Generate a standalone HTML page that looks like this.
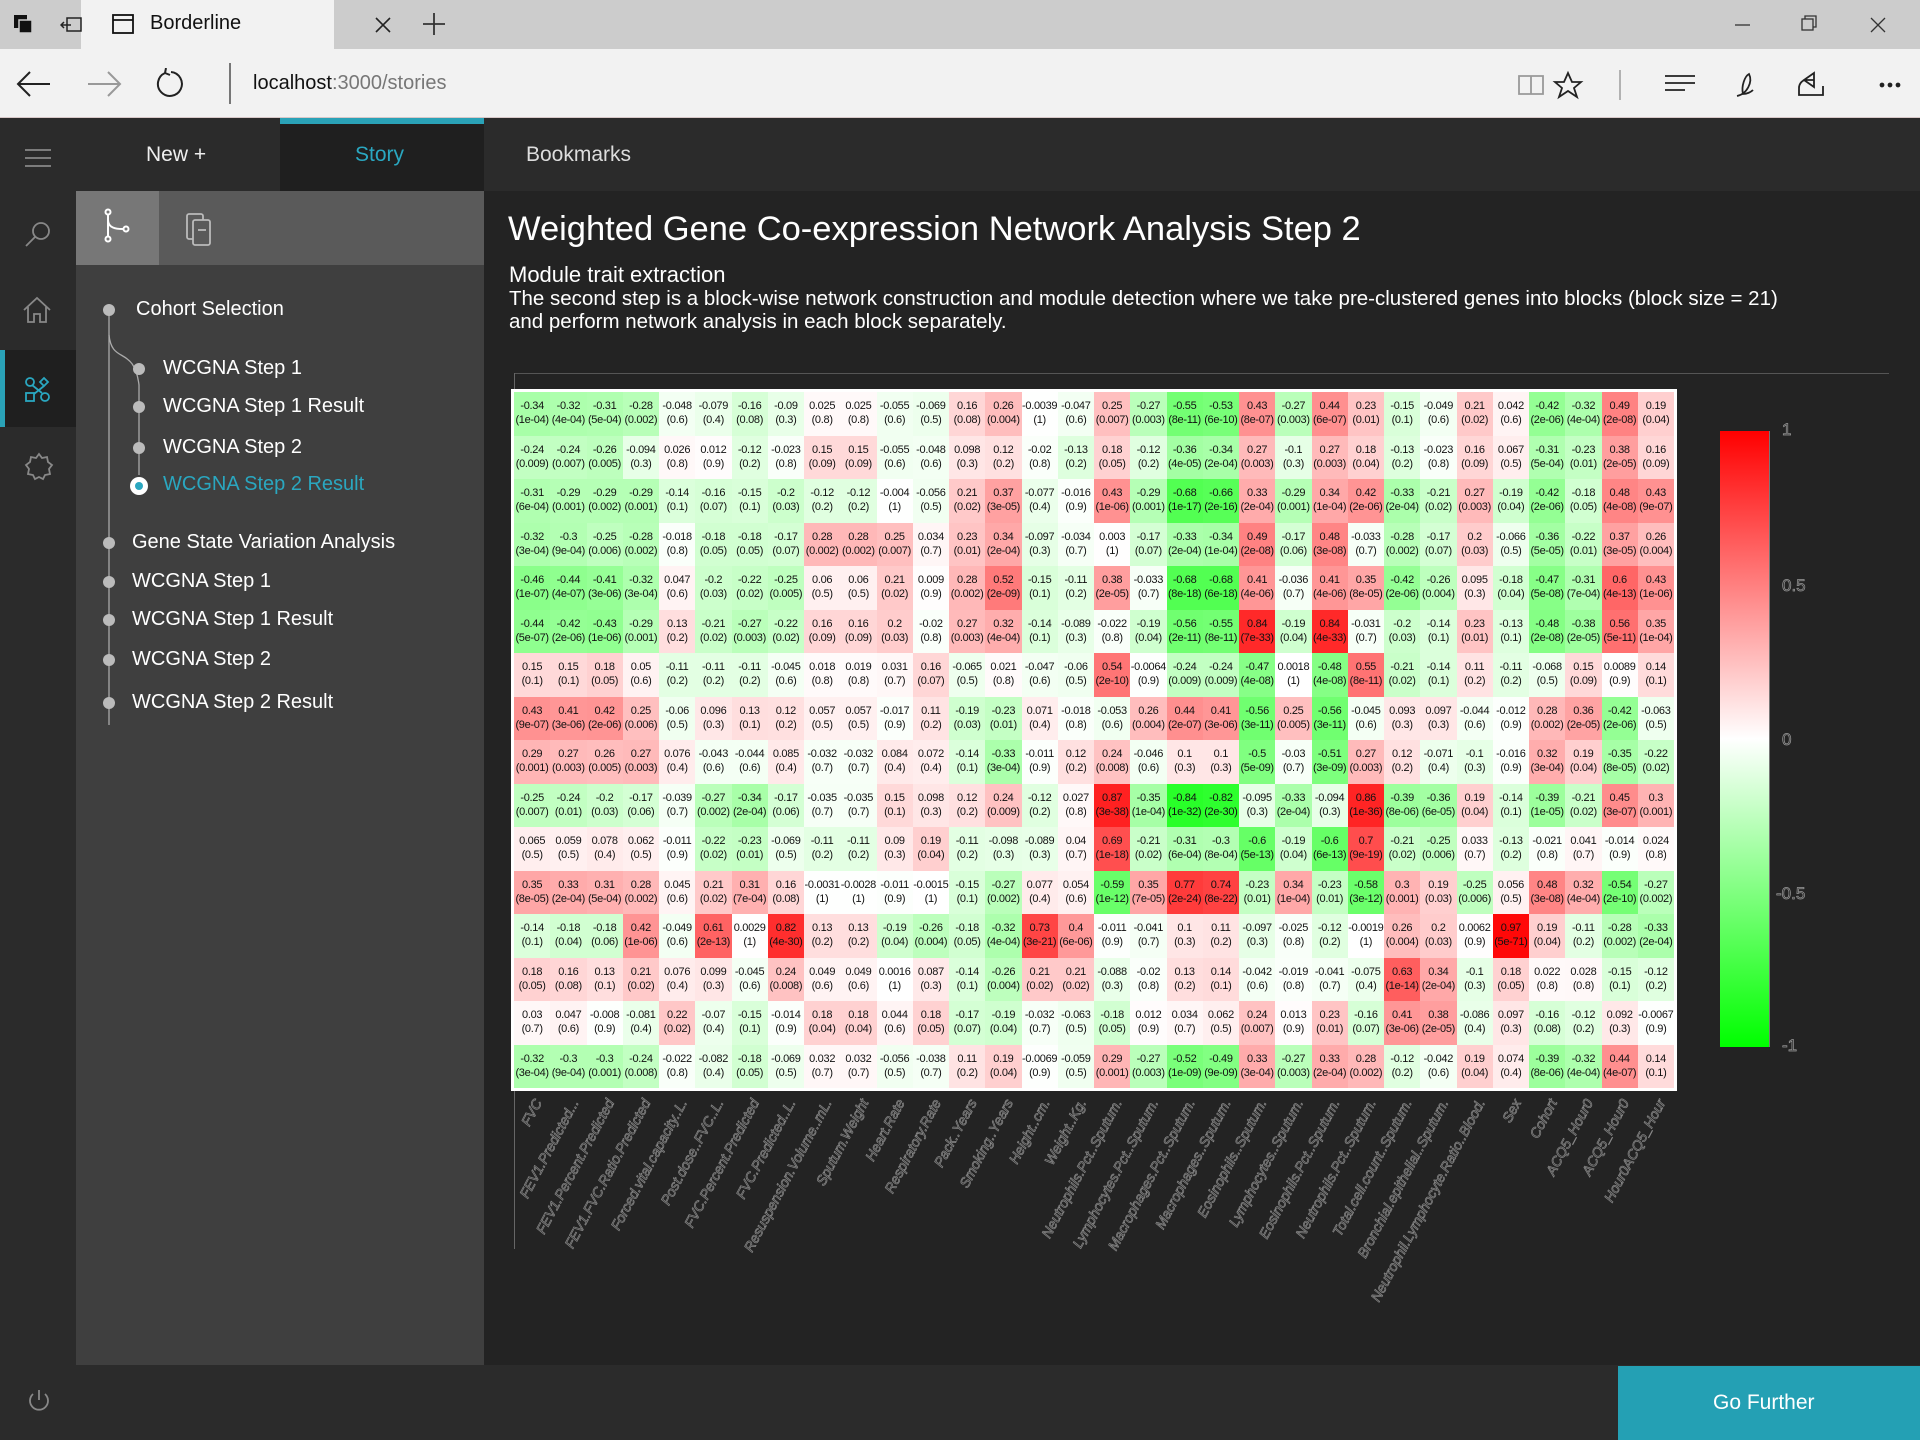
<!DOCTYPE html>
<html><head><meta charset="utf-8">
<style>
*{box-sizing:border-box;margin:0;padding:0}
body{width:1920px;height:1440px;overflow:hidden;background:#222;font-family:"Liberation Sans",sans-serif;position:relative}
.abs{position:absolute}
#tabbar{left:0;top:0;width:1920px;height:49px;background:#cccccc}
#tab{left:81px;top:0;width:253px;height:49px;background:#f2f2f2}
#addr{left:0;top:49px;width:1920px;height:69px;background:#f2f2f2;border-bottom:1px solid #d8c8c8}
#rail{left:0;top:118px;width:76px;height:1322px;background:#2b2b2b}
#header{left:76px;top:118px;width:1844px;height:73px;background:#2b2b2b}
#side{left:76px;top:191px;width:408px;height:1174px;background:#3f3f3f}
#main{left:484px;top:191px;width:1436px;height:1174px;background:#232323}
#bottom{left:76px;top:1365px;width:1844px;height:75px;background:#2b2b2b}
.t{color:#fff;font-size:20px;position:absolute;white-space:nowrap}
.tree .t{font-size:20px}
.dot{position:absolute;width:12px;height:12px;border-radius:50%;background:#bbb}
#grid{position:absolute;left:514px;top:392px;width:1160px;height:696px;background:#fff;outline:3px solid #fff}
.c{position:absolute;width:36.25px;height:43.5px;font-size:11px;color:#111;text-align:center;line-height:14px;padding-top:7px;white-space:nowrap;letter-spacing:-0.3px}
.lab{position:absolute;font-size:14px;color:#2a2a2a;-webkit-text-stroke:0.7px #888;font-style:italic;white-space:nowrap;transform-origin:100% 50%;transform:rotate(-62deg)}
</style></head><body>
<div id="tabbar" class="abs"></div>
<div id="tab" class="abs"></div>
<svg class="abs" style="left:13px;top:14px" width="22" height="22"><rect x="1" y="1" width="13" height="13" fill="#111"/><rect x="6" y="6" width="13" height="13" fill="#111" stroke="#ccc" stroke-width="1.5"/></svg>
<svg class="abs" style="left:60px;top:14px" width="24" height="22" fill="none" stroke="#222" stroke-width="1.5"><rect x="7" y="4" width="14" height="13"/><path d="M1 11h10M4 8l-3 3 3 3"/></svg>
<svg class="abs" style="left:111px;top:12px" width="24" height="24" fill="none" stroke="#111" stroke-width="1.8"><rect x="2" y="3" width="20" height="18"/><path d="M2 8h20"/></svg>
<div class="t" style="left:150px;top:12px;color:#111;font-size:20px">Borderline</div>
<svg class="abs" style="left:375px;top:17px" width="16" height="16" stroke="#222" stroke-width="1.6"><path d="M1 1l14 14M15 1L1 15"/></svg>
<svg class="abs" style="left:423px;top:13px" width="22" height="22" stroke="#333" stroke-width="1.8"><path d="M11 0v22M0 11h22"/></svg>
<svg class="abs" style="left:1735px;top:15px" width="170" height="20" stroke="#333" stroke-width="1.3" fill="none"><path d="M0 10h15"/><rect x="67" y="4" width="11" height="11"/><path d="M70 4V1h11v11h-3"/><path d="M136 3l14 14M150 3l-14 14"/></svg>
<div id="addr" class="abs"></div>
<svg class="abs" style="left:16px;top:70px" width="36" height="28" fill="none" stroke="#222" stroke-width="2"><path d="M2 14h32M14 2L2 14l12 12"/></svg>
<svg class="abs" style="left:86px;top:70px" width="36" height="28" fill="none" stroke="#999" stroke-width="2"><path d="M2 14h32M22 2l12 12-12 12"/></svg>
<svg class="abs" style="left:155px;top:68px" width="32" height="32" fill="none" stroke="#222" stroke-width="2"><path d="M10 5A12 12 0 1 0 16 4M10 5l1-5M10 5l5 2"/></svg>
<div class="abs" style="left:229px;top:63px;width:2px;height:41px;background:#777"></div>
<div class="t" style="left:253px;top:72px;color:#111;font-size:20px">localhost<span style="color:#777">:3000/stories</span></div>
<svg class="abs" style="left:1517px;top:70px" width="400" height="30" fill="none" stroke="#222" stroke-width="1.8"><path d="M2 6h12v18H2zM14 6h12v18H14" stroke="#999"/><path d="M51 3l4 9h9l-7 6 3 9-9-6-9 6 3-9-7-6h9z"/><path d="M103 0v30" stroke="#aaa"/><path d="M148 6h30M148 13h30M148 20h20"/><path d="M220 26c10-2 16-14 12-22-4 2-8 12-6 20 4 0 8-2 10-4"/><path d="M287 10l10-7v14zM297 10h-8c-4 0-7 4-7 8v7h24v-9"/><circle cx="365" cy="15" r="1.5" fill="#222"/><circle cx="373" cy="15" r="1.5" fill="#222"/><circle cx="381" cy="15" r="1.5" fill="#222"/></svg>

<div id="rail" class="abs"></div>
<div id="header" class="abs"></div>
<div class="abs" style="left:280px;top:118px;width:204px;height:73px;background:#1f1f1f;border-top:6px solid #2aa2b7"></div>
<div class="t" style="left:146px;top:143px;font-size:21px;color:#eee">New +</div>
<div class="t" style="left:355px;top:143px;font-size:21px;color:#2aa7c0">Story</div>
<div class="t" style="left:526px;top:143px;font-size:21px;color:#ddd">Bookmarks</div>
<svg class="abs" style="left:24px;top:148px" width="28" height="20" stroke="#888" stroke-width="1.8"><path d="M1 2h26M1 10h26M1 18h26"/></svg>
<svg class="abs" style="left:24px;top:220px" width="28" height="28" fill="none" stroke="#888" stroke-width="1.8"><circle cx="17" cy="11" r="8"/><path d="M11 17L2 26"/></svg>
<svg class="abs" style="left:22px;top:295px" width="30" height="30" fill="none" stroke="#888" stroke-width="1.8"><path d="M2 15L15 3l13 12M6 12v15h6v-8h6v8h6V12"/></svg>
<div class="abs" style="left:0;top:350px;width:76px;height:77px;background:#1f1f1f;border-left:5px solid #2aa2b7"></div>
<svg class="abs" style="left:24px;top:375px" width="30" height="30" fill="none" stroke="#2aa7c0" stroke-width="1.8"><circle cx="6" cy="7" r="4"/><path d="M20 3l4 4-4 4-4-4z"/><rect x="2" y="18" width="8" height="8"/><circle cx="21" cy="22" r="4"/><path d="M8 10l10 8M20 11l-10 8"/></svg>
<svg class="abs" style="left:24px;top:452px" width="30" height="30" fill="none" stroke="#888" stroke-width="1.8"><path d="M15 2l3 4 5-1 1 5 4 3-3 4 1 5-5 1-2 4-4-2-4 2-2-4-5-1 1-5-3-4 4-3 1-5 5 1z"/></svg>
<svg class="abs" style="left:26px;top:1388px" width="26" height="26" fill="none" stroke="#888" stroke-width="1.8"><path d="M13 2v10M7 6a9 9 0 1 0 12 0"/></svg>

<div id="side" class="abs"></div>
<div class="abs" style="left:76px;top:191px;width:408px;height:74px;background:#5a5a5a"></div>
<div class="abs" style="left:76px;top:191px;width:83px;height:74px;background:#777"></div>
<svg class="abs" style="left:102px;top:208px" width="30" height="36" fill="none" stroke="#fff" stroke-width="2"><circle cx="6" cy="4" r="2.5"/><circle cx="6" cy="31" r="2.5"/><circle cx="24" cy="21" r="2.5"/><path d="M6 7v21M6 12c0 8 8 9 15 9"/></svg>
<svg class="abs" style="left:186px;top:213px" width="30" height="34" fill="none" stroke="#bbb" stroke-width="1.8"><rect x="1" y="1" width="16" height="25" rx="2"/><rect x="7" y="7" width="17" height="25" rx="2" fill="#5a5a5a"/><path d="M12 17h8"/></svg>
<div class="tree">
<svg class="abs" style="left:100px;top:305px" width="50" height="420" fill="none" stroke="#aaa" stroke-width="1.3"><path d="M9 5v415"/><path d="M9 30c3 30 25 10 30 50v90"/></svg>
<div class="dot" style="left:103px;top:304px"></div><div class="t" style="left:136px;top:298px">Cohort Selection</div>
<div class="dot" style="left:133px;top:363px"></div><div class="t" style="left:163px;top:357px">WCGNA Step 1</div>
<div class="dot" style="left:133px;top:401px"></div><div class="t" style="left:163px;top:395px">WCGNA Step 1 Result</div>
<div class="dot" style="left:133px;top:442px"></div><div class="t" style="left:163px;top:436px">WCGNA Step 2</div>
<div class="abs" style="left:130px;top:477px;width:18px;height:18px;border-radius:50%;background:#fff"></div><div class="abs" style="left:135px;top:482px;width:8px;height:8px;border-radius:50%;background:#2aa7c0"></div>
<div class="t" style="left:163px;top:473px;color:#2aa7c0">WCGNA Step 2 Result</div>
<div class="dot" style="left:103px;top:537px"></div><div class="t" style="left:132px;top:531px">Gene State Variation Analysis</div>
<div class="dot" style="left:103px;top:576px"></div><div class="t" style="left:132px;top:570px">WCGNA Step 1</div>
<div class="dot" style="left:103px;top:614px"></div><div class="t" style="left:132px;top:608px">WCGNA Step 1 Result</div>
<div class="dot" style="left:103px;top:654px"></div><div class="t" style="left:132px;top:648px">WCGNA Step 2</div>
<div class="dot" style="left:103px;top:697px"></div><div class="t" style="left:132px;top:691px">WCGNA Step 2 Result</div>
</div>

<div id="main" class="abs"></div>
<div class="t" style="left:508px;top:210px;font-size:34.5px;color:#fff">Weighted Gene Co-expression Network Analysis Step 2</div>
<div class="t" style="left:509px;top:262px;font-size:22px;color:#fff">Module trait extraction</div>
<div class="t" style="left:509px;top:287px;font-size:20.5px;color:#fff;line-height:23px">The second step is a block-wise network construction and module detection where we take pre-clustered genes into blocks (block size = 21)<br>and perform network analysis in each block separately.</div>
<div class="abs" style="left:514px;top:373px;width:1375px;height:1px;background:#555"></div>
<div class="abs" style="left:514px;top:373px;width:1px;height:876px;background:#666"></div>
<div id="grid"></div>
<div class="abs" style="left:1720px;top:431px;width:49px;height:616px;background:linear-gradient(#ff0000,#ffffff 50%,#00ff00)"></div>
<div class="abs" style="left:1769px;top:431px;width:1px;height:616px;background:#777"></div>
<div class="t" style="left:1782px;top:420px;font-size:17px;color:#2a2a2a;-webkit-text-stroke:0.7px #999">1</div>
<div class="t" style="left:1782px;top:576px;font-size:17px;color:#2a2a2a;-webkit-text-stroke:0.7px #999">0.5</div>
<div class="t" style="left:1782px;top:730px;font-size:17px;color:#2a2a2a;-webkit-text-stroke:0.7px #999">0</div>
<div class="t" style="left:1776px;top:884px;font-size:17px;color:#2a2a2a;-webkit-text-stroke:0.7px #999">-0.5</div>
<div class="t" style="left:1782px;top:1036px;font-size:17px;color:#2a2a2a;-webkit-text-stroke:0.7px #999">-1</div>
<div id="labs"></div>

<div id="bottom" class="abs"></div>
<div class="abs" style="left:1618px;top:1366px;width:302px;height:74px;background:#24a0b4"></div>
<div class="t" style="left:1713px;top:1391px;font-size:21px;color:#fff">Go Further</div>

<script>
var R=[
"-0.34 -0.32 -0.31 -0.28 -0.048 -0.079 -0.16 -0.09 0.025 0.025 -0.055 -0.069 0.16 0.26 -0.0039 -0.047 0.25 -0.27 -0.55 -0.53 0.43 -0.27 0.44 0.23 -0.15 -0.049 0.21 0.042 -0.42 -0.32 0.49 0.19",
"-0.24 -0.24 -0.26 -0.094 0.026 0.012 -0.12 -0.023 0.15 0.15 -0.055 -0.048 0.098 0.12 -0.02 -0.13 0.18 -0.12 -0.36 -0.34 0.27 -0.1 0.27 0.18 -0.13 -0.023 0.16 0.067 -0.31 -0.23 0.38 0.16",
"-0.31 -0.29 -0.29 -0.29 -0.14 -0.16 -0.15 -0.2 -0.12 -0.12 -0.004 -0.056 0.21 0.37 -0.077 -0.016 0.43 -0.29 -0.68 -0.66 0.33 -0.29 0.34 0.42 -0.33 -0.21 0.27 -0.19 -0.42 -0.18 0.48 0.43",
"-0.32 -0.3 -0.25 -0.28 -0.018 -0.18 -0.18 -0.17 0.28 0.28 0.25 0.034 0.23 0.34 -0.097 -0.034 0.003 -0.17 -0.33 -0.34 0.49 -0.17 0.48 -0.033 -0.28 -0.17 0.2 -0.066 -0.36 -0.22 0.37 0.26",
"-0.46 -0.44 -0.41 -0.32 0.047 -0.2 -0.22 -0.25 0.06 0.06 0.21 0.009 0.28 0.52 -0.15 -0.11 0.38 -0.033 -0.68 -0.68 0.41 -0.036 0.41 0.35 -0.42 -0.26 0.095 -0.18 -0.47 -0.31 0.6 0.43",
"-0.44 -0.42 -0.43 -0.29 0.13 -0.21 -0.27 -0.22 0.16 0.16 0.2 -0.02 0.27 0.32 -0.14 -0.089 -0.022 -0.19 -0.56 -0.55 0.84 -0.19 0.84 -0.031 -0.2 -0.14 0.23 -0.13 -0.48 -0.38 0.56 0.35",
"0.15 0.15 0.18 0.05 -0.11 -0.11 -0.11 -0.045 0.018 0.019 0.031 0.16 -0.065 0.021 -0.047 -0.06 0.54 -0.0064 -0.24 -0.24 -0.47 0.0018 -0.48 0.55 -0.21 -0.14 0.11 -0.11 -0.068 0.15 0.0089 0.14",
"0.43 0.41 0.42 0.25 -0.06 0.096 0.13 0.12 0.057 0.057 -0.017 0.11 -0.19 -0.23 0.071 -0.018 -0.053 0.26 0.44 0.41 -0.56 0.25 -0.56 -0.045 0.093 0.097 -0.044 -0.012 0.28 0.36 -0.42 -0.063",
"0.29 0.27 0.26 0.27 0.076 -0.043 -0.044 0.085 -0.032 -0.032 0.084 0.072 -0.14 -0.33 -0.011 0.12 0.24 -0.046 0.1 0.1 -0.5 -0.03 -0.51 0.27 0.12 -0.071 -0.1 -0.016 0.32 0.19 -0.35 -0.22",
"-0.25 -0.24 -0.2 -0.17 -0.039 -0.27 -0.34 -0.17 -0.035 -0.035 0.15 0.098 0.12 0.24 -0.12 0.027 0.87 -0.35 -0.84 -0.82 -0.095 -0.33 -0.094 0.86 -0.39 -0.36 0.19 -0.14 -0.39 -0.21 0.45 0.3",
"0.065 0.059 0.078 0.062 -0.011 -0.22 -0.23 -0.069 -0.11 -0.11 0.09 0.19 -0.11 -0.098 -0.089 0.04 0.69 -0.21 -0.31 -0.3 -0.6 -0.19 -0.6 0.7 -0.21 -0.25 0.033 -0.13 -0.021 0.041 -0.014 0.024",
"0.35 0.33 0.31 0.28 0.045 0.21 0.31 0.16 -0.0031 -0.0028 -0.011 -0.0015 -0.15 -0.27 0.077 0.054 -0.59 0.35 0.77 0.74 -0.23 0.34 -0.23 -0.58 0.3 0.19 -0.25 0.056 0.48 0.32 -0.54 -0.27",
"-0.14 -0.18 -0.18 0.42 -0.049 0.61 0.0029 0.82 0.13 0.13 -0.19 -0.26 -0.18 -0.32 0.73 0.4 -0.011 -0.041 0.1 0.11 -0.097 -0.025 -0.12 -0.0019 0.26 0.2 0.0062 0.97 0.19 -0.11 -0.28 -0.33",
"0.18 0.16 0.13 0.21 0.076 0.099 -0.045 0.24 0.049 0.049 0.0016 0.087 -0.14 -0.26 0.21 0.21 -0.088 -0.02 0.13 0.14 -0.042 -0.019 -0.041 -0.075 0.63 0.34 -0.1 0.18 0.022 0.028 -0.15 -0.12",
"0.03 0.047 -0.008 -0.081 0.22 -0.07 -0.15 -0.014 0.18 0.18 0.044 0.18 -0.17 -0.19 -0.032 -0.063 -0.18 0.012 0.034 0.062 0.24 0.013 0.23 -0.16 0.41 0.38 -0.086 0.097 -0.16 -0.12 0.092 -0.0067",
"-0.32 -0.3 -0.3 -0.24 -0.022 -0.082 -0.18 -0.069 0.032 0.032 -0.056 -0.038 0.11 0.19 -0.0069 -0.059 0.29 -0.27 -0.52 -0.49 0.33 -0.27 0.33 0.28 -0.12 -0.042 0.19 0.074 -0.39 -0.32 0.44 0.14"];
var P=[
"1e-04 4e-04 5e-04 0.002 0.6 0.4 0.08 0.3 0.8 0.8 0.6 0.5 0.08 0.004 1 0.6 0.007 0.003 8e-11 6e-10 8e-07 0.003 6e-07 0.01 0.1 0.6 0.02 0.6 2e-06 4e-04 2e-08 0.04",
"0.009 0.007 0.005 0.3 0.8 0.9 0.2 0.8 0.09 0.09 0.6 0.6 0.3 0.2 0.8 0.2 0.05 0.2 4e-05 2e-04 0.003 0.3 0.003 0.04 0.2 0.8 0.09 0.5 5e-04 0.01 2e-05 0.09",
"6e-04 0.001 0.002 0.001 0.1 0.07 0.1 0.03 0.2 0.2 1 0.5 0.02 3e-05 0.4 0.9 1e-06 0.001 1e-17 2e-16 2e-04 0.001 1e-04 2e-06 2e-04 0.02 0.003 0.04 2e-06 0.05 4e-08 9e-07",
"3e-04 9e-04 0.006 0.002 0.8 0.05 0.05 0.07 0.002 0.002 0.007 0.7 0.01 2e-04 0.3 0.7 1 0.07 2e-04 1e-04 2e-08 0.06 3e-08 0.7 0.002 0.07 0.03 0.5 5e-05 0.01 3e-05 0.004",
"1e-07 4e-07 3e-06 3e-04 0.6 0.03 0.02 0.005 0.5 0.5 0.02 0.9 0.002 2e-09 0.1 0.2 2e-05 0.7 8e-18 6e-18 4e-06 0.7 4e-06 8e-05 2e-06 0.004 0.3 0.04 5e-08 7e-04 4e-13 1e-06",
"5e-07 2e-06 1e-06 0.001 0.2 0.02 0.003 0.02 0.09 0.09 0.03 0.8 0.003 4e-04 0.1 0.3 0.8 0.04 2e-11 8e-11 7e-33 0.04 4e-33 0.7 0.03 0.1 0.01 0.1 2e-08 2e-05 5e-11 1e-04",
"0.1 0.1 0.05 0.6 0.2 0.2 0.2 0.6 0.8 0.8 0.7 0.07 0.5 0.8 0.6 0.5 2e-10 0.9 0.009 0.009 4e-08 1 4e-08 8e-11 0.02 0.1 0.2 0.2 0.5 0.09 0.9 0.1",
"9e-07 3e-06 2e-06 0.006 0.5 0.3 0.1 0.2 0.5 0.5 0.9 0.2 0.03 0.01 0.4 0.8 0.6 0.004 2e-07 3e-06 3e-11 0.005 3e-11 0.6 0.3 0.3 0.6 0.9 0.002 2e-05 2e-06 0.5",
"0.001 0.003 0.005 0.003 0.4 0.6 0.6 0.4 0.7 0.7 0.4 0.4 0.1 3e-04 0.9 0.2 0.008 0.6 0.3 0.3 5e-09 0.7 3e-09 0.003 0.2 0.4 0.3 0.9 3e-04 0.04 8e-05 0.02",
"0.007 0.01 0.03 0.06 0.7 0.002 2e-04 0.06 0.7 0.7 0.1 0.3 0.2 0.009 0.2 0.8 3e-38 1e-04 1e-32 2e-30 0.3 2e-04 0.3 1e-36 8e-06 6e-05 0.04 0.1 1e-05 0.02 3e-07 0.001",
"0.5 0.5 0.4 0.5 0.9 0.02 0.01 0.5 0.2 0.2 0.3 0.04 0.2 0.3 0.3 0.7 1e-18 0.02 6e-04 8e-04 5e-13 0.04 6e-13 9e-19 0.02 0.006 0.7 0.2 0.8 0.7 0.9 0.8",
"8e-05 2e-04 5e-04 0.002 0.6 0.02 7e-04 0.08 1 1 0.9 1 0.1 0.002 0.4 0.6 1e-12 7e-05 2e-24 8e-22 0.01 1e-04 0.01 3e-12 0.001 0.03 0.006 0.5 3e-08 4e-04 2e-10 0.002",
"0.1 0.04 0.06 1e-06 0.6 2e-13 1 4e-30 0.2 0.2 0.04 0.004 0.05 4e-04 3e-21 6e-06 0.9 0.7 0.3 0.2 0.3 0.8 0.2 1 0.004 0.03 0.9 5e-71 0.04 0.2 0.002 2e-04",
"0.05 0.08 0.1 0.02 0.4 0.3 0.6 0.008 0.6 0.6 1 0.3 0.1 0.004 0.02 0.02 0.3 0.8 0.2 0.1 0.6 0.8 0.7 0.4 1e-14 2e-04 0.3 0.05 0.8 0.8 0.1 0.2",
"0.7 0.6 0.9 0.4 0.02 0.4 0.1 0.9 0.04 0.04 0.6 0.05 0.07 0.04 0.7 0.5 0.05 0.9 0.7 0.5 0.007 0.9 0.01 0.07 3e-06 2e-05 0.4 0.3 0.08 0.2 0.3 0.9",
"3e-04 9e-04 0.001 0.008 0.8 0.4 0.05 0.5 0.7 0.7 0.5 0.7 0.2 0.04 0.9 0.5 0.001 0.003 1e-09 9e-09 3e-04 0.003 2e-04 0.002 0.2 0.6 0.04 0.4 8e-06 4e-04 4e-07 0.1"];
var g=document.getElementById('grid'),h='';
for(var i=0;i<16;i++){var r=R[i].split(' '),p=P[i].split(' ');
for(var j=0;j<32;j++){var v=parseFloat(r[j]),a=Math.round(255*(1-Math.abs(v)));
var col=v>=0?'rgb(255,'+a+','+a+')':'rgb('+a+',255,'+a+')';
h+='<div class="c" style="left:'+(j*36.25)+'px;top:'+(i*43.5)+'px;background:'+col+'">'+r[j]+'<br>('+p[j]+')</div>';}}
g.innerHTML=h;
var L=["FVC","FEV1.Predicted...","FEV1.Percent.Predicted","FEV1.FVC.Ratio.Predicted","Forced.vital.capacity..L.","Post.dose..FVC..L.","FVC.Percent.Predicted","FVC.Predicted..L.","Resuspension.Volume..mL.","Sputum.Weight","Heart.Rate","Respiratory.Rate","Pack..Years","Smoking..Years","Height..cm.","Weight..Kg.","Neutrophils.Pct..Sputum.","Lymphocytes.Pct..Sputum.","Macrophages.Pct..Sputum.","Macrophages..Sputum.","Eosinophils..Sputum.","Lymphocytes..Sputum.","Eosinophils.Pct..Sputum.","Neutrophils.Pct..Sputum.","Total.cell.count..Sputum.","Bronchial.epithelial..Sputum.","Neutrophil.Lymphocyte.Ratio..Blood.","Sex","Cohort","ACQ5_Hour0","ACQ5_Hour0","Hour0ACQ5_Hour"];
var lh='';for(var k=0;k<32;k++){lh+='<div class="lab" style="right:'+(1920-(514+k*36.25+24))+'px;top:1092px">'+L[k]+'</div>';}
document.getElementById('labs').innerHTML=lh;
</script>
</body></html>
